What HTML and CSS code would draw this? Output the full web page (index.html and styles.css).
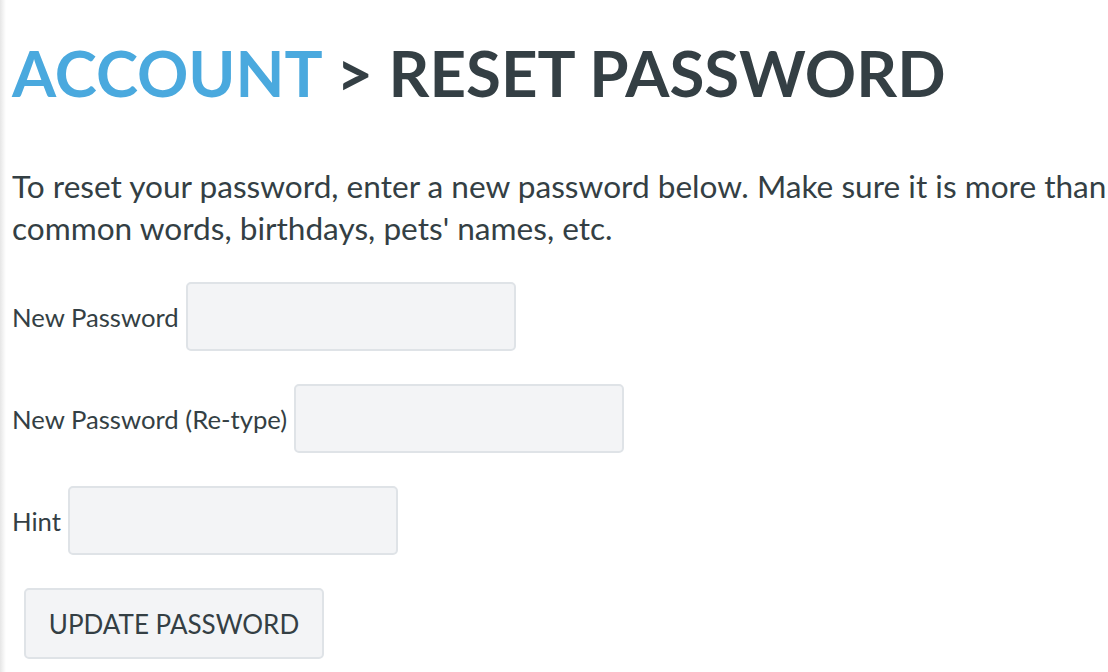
FILE: index.html
```html
<!DOCTYPE html>
<html>
<head>
<meta charset="utf-8">
<link rel="stylesheet" href="styles.css">
</head>
<body>
<div class="page">
  <h1 class="title"><a class="crumb" href="#">ACCOUNT</a> &gt; RESET PASSWORD</h1>
  <div class="clip">
    <p class="intro">To reset your password, enter a new password below. Make sure it is more than 8 characters long and avoid<br>common words, birthdays, pets' names, etc.</p>
  </div>
  <form class="form">
    <div class="row"><label class="label">New Password</label><input class="field" type="password"></div>
    <div class="row"><label class="label">New Password (Re-type)</label><input class="field" type="password"></div>
    <div class="row"><label class="label">Hint</label><input class="field" type="text"></div>
    <div class="actions"><button class="btn" type="button">UPDATE PASSWORD</button></div>
  </form>
</div>
</body>
</html>
```
FILE: styles.css
```css
html, body {
  margin: 0;
  height: 100%;
  overflow: hidden;
  background: #fff;
}
body {
  font-family: Lato, "Open Sans", sans-serif;
  color: #343f44;
  background: linear-gradient(to right, #e6e6e6 0, #f3f3f3 3px, #fff 6px);
}
.page {
  padding: 28px 0 0 12px;
}
.title {
  margin: 0;
  font-size: 63.6px;
  line-height: 90px;
  font-weight: 700;
  color: #343f44;
  white-space: nowrap;
}
.crumb {
  color: #4aa9de;
  text-decoration: none;
  font-weight: 700;
}
.clip {
  overflow: hidden;
  margin-right: 2px;
}
.intro {
  margin: 47px 0 0;
  font-size: 31.6px;
  line-height: 42px;
  white-space: nowrap;
}
.form {
  margin-top: 33px;
  display: flex;
  flex-direction: column;
  gap: 33px;
}
.row {
  display: flex;
  align-items: center;
  gap: 7px;
}
.label {
  font-size: 25.7px;
}
.field {
  box-sizing: border-box;
  width: 330px;
  height: 69px;
  margin: 0;
  background: #f3f4f6;
  border: 2px solid #dfe3e7;
  border-radius: 5px;
  padding: 0 12px;
  font-size: 24px;
}
.actions {
  padding-left: 12px;
}
.btn {
  box-sizing: border-box;
  width: 300px;
  height: 71px;
  background: #f3f4f6;
  border: 2px solid #dfe3e7;
  border-radius: 5px;
  font-family: Lato, sans-serif;
  font-size: 26px;
  color: #343f44;
  padding: 0;
}
```
